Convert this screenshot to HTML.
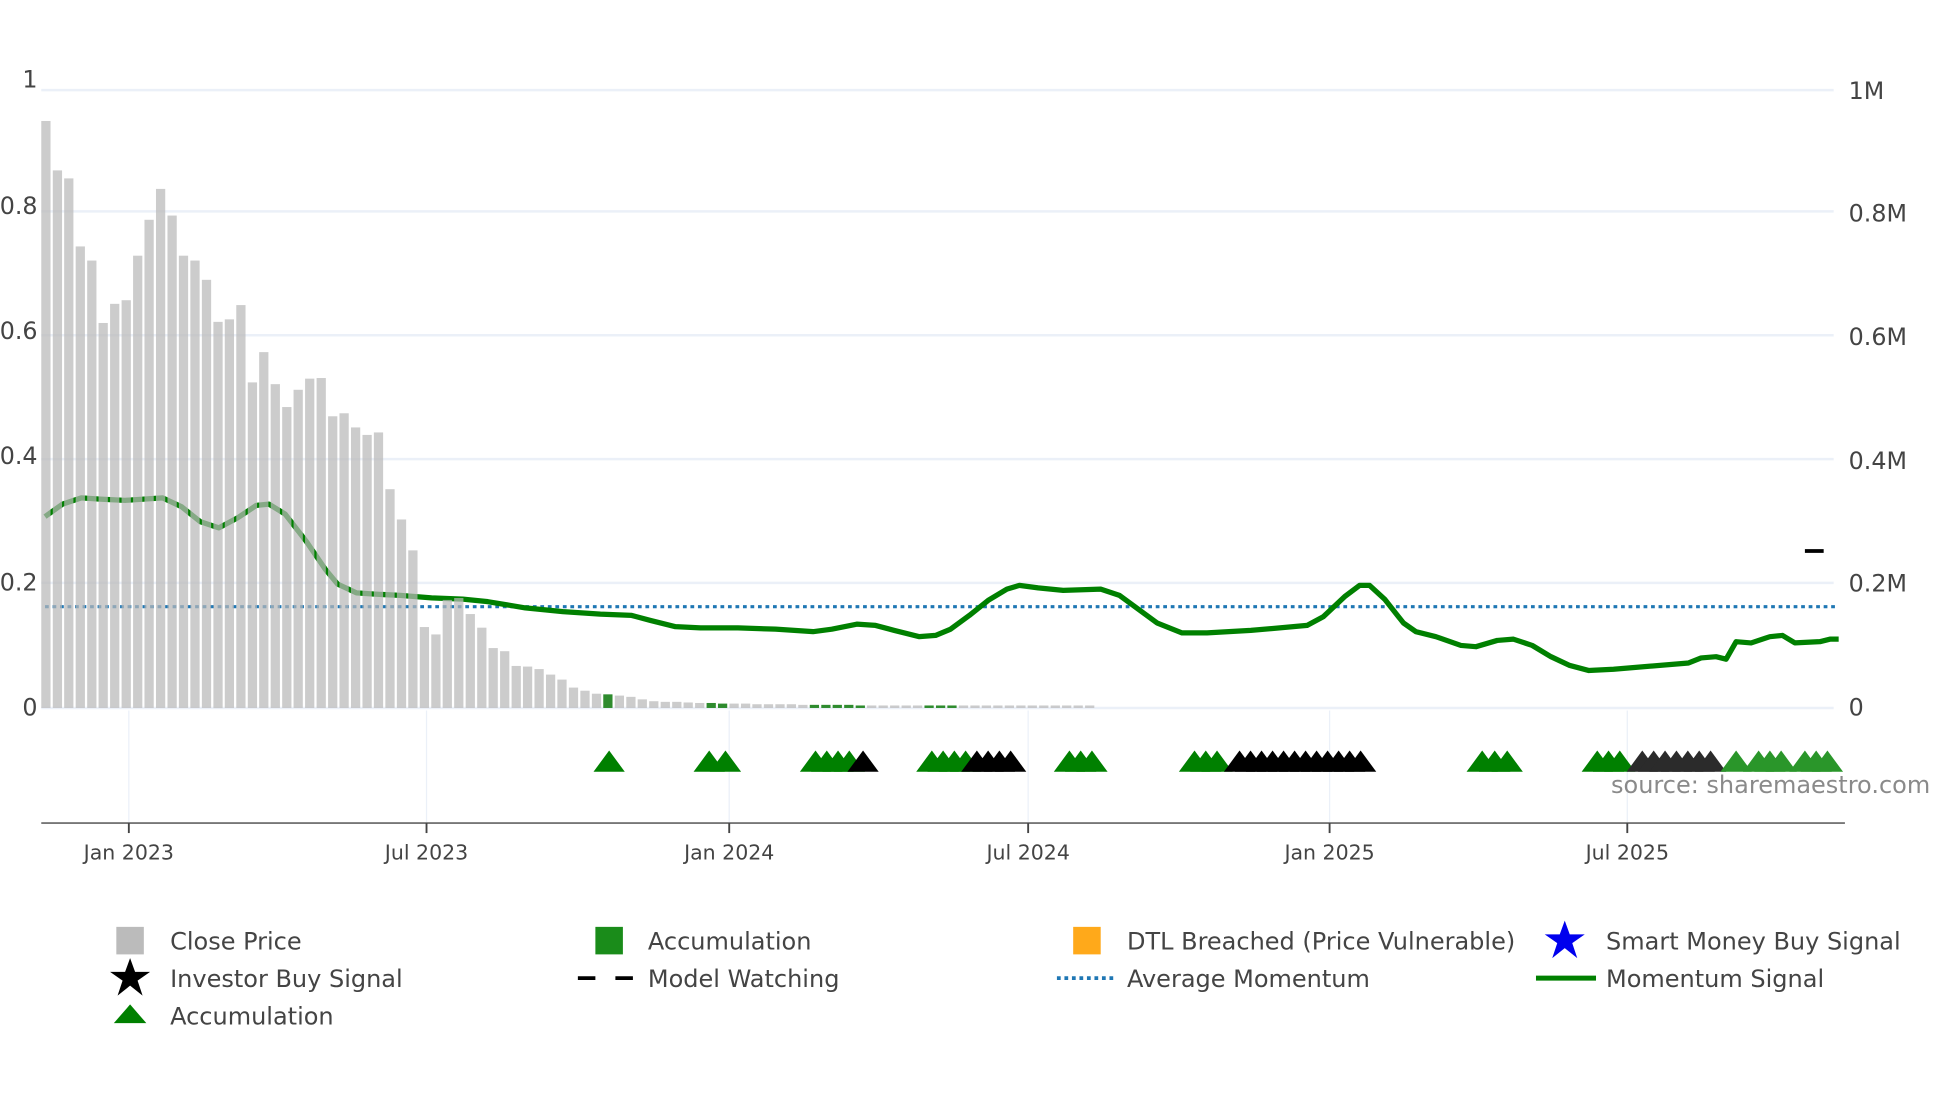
<!DOCTYPE html>
<html><head><meta charset="utf-8"><style>
html,body{margin:0;padding:0;background:#fff;}
svg{display:block;}
text{font-family:"DejaVu Sans","Liberation Sans",sans-serif;fill:#444;}
</style></head><body>
<svg id="s" width="1960" height="1102" viewBox="0 0 1567 881" xmlns="http://www.w3.org/2000/svg">
<g stroke="#ebf0f8" stroke-width="2">
<line x1="33" y1="72" x2="1466" y2="72"/>
<line x1="33" y1="169" x2="1466" y2="169"/>
<line x1="33" y1="268" x2="1466" y2="268"/>
<line x1="33" y1="367" x2="1466" y2="367"/>
<line x1="33" y1="466" x2="1466" y2="466"/>
<line x1="33" y1="566" x2="1466" y2="566"/>
</g>
<g stroke="#ebf0f8" stroke-width="1">
<line x1="103" y1="568" x2="103" y2="658"/><line x1="341" y1="568" x2="341" y2="658"/>
<line x1="583" y1="568" x2="583" y2="658"/><line x1="822" y1="568" x2="822" y2="658"/>
<line x1="1063" y1="568" x2="1063" y2="658"/><line x1="1301" y1="568" x2="1301" y2="658"/>
</g>
<line x1="36" y1="485" x2="1470" y2="485" stroke="#1f77b4" stroke-width="2.5" stroke-dasharray="3,3"/>
<path id="mom" fill="none" stroke="#008000" stroke-width="4.2" stroke-linejoin="round" d=""/>
<g id="bars"></g>
<rect x="1443" y="439" width="15" height="3" fill="#000"/>
<g id="tri"></g>
<text x="1288" y="634" font-size="19.2" style="fill:#8a8a8a">source: sharemaestro.com</text>
<line x1="33" y1="658" x2="1475" y2="658" stroke="#777" stroke-width="1.5"/>
<g stroke="#444" stroke-width="1.5">
<line x1="103" y1="658" x2="103" y2="666"/><line x1="341" y1="658" x2="341" y2="666"/>
<line x1="583" y1="658" x2="583" y2="666"/><line x1="822" y1="658" x2="822" y2="666"/>
<line x1="1063" y1="658" x2="1063" y2="666"/><line x1="1301" y1="658" x2="1301" y2="666"/>
</g>
<g font-size="16.4" text-anchor="middle">
<text x="103" y="687">Jan 2023</text><text x="341" y="687">Jul 2023</text>
<text x="583" y="687">Jan 2024</text><text x="822" y="687">Jul 2024</text>
<text x="1063" y="687">Jan 2025</text><text x="1301" y="687">Jul 2025</text>
</g>
<g font-size="19" text-anchor="end">
<text x="30" y="70">1</text><text x="30" y="171">0.8</text><text x="30" y="271">0.6</text>
<text x="30" y="371">0.4</text><text x="30" y="472">0.2</text><text x="30" y="572">0</text>
</g>
<g font-size="19">
<text x="1478" y="79">1M</text><text x="1478" y="177">0.8M</text><text x="1478" y="276">0.6M</text>
<text x="1478" y="375">0.4M</text><text x="1478" y="473">0.2M</text><text x="1478" y="572">0</text>
</g>
<g font-size="19.2">
<rect x="93" y="741" width="22" height="22" fill="#bbb"/><text x="136" y="759">Close Price</text>
<rect x="476" y="741" width="22" height="22" fill="#1a8c1a"/><text x="518" y="759">Accumulation</text>
<rect x="858" y="741" width="22" height="22" fill="#ffa91a"/><text x="901" y="759">DTL Breached (Price Vulnerable)</text>
<polygon points="1251,736 1255,747 1267,747 1257,754 1261,766 1251,758 1241,766 1245,754 1235,747 1247,747" fill="#0000ee"/><text x="1284" y="759">Smart Money Buy Signal</text>
<polygon points="104,766 108,777 120,777 110,784 114,796 104,788 94,796 98,784 88,777 100,777" fill="#000"/><text x="136" y="789">Investor Buy Signal</text>
<line x1="462" y1="782" x2="506" y2="782" stroke="#000" stroke-width="3" stroke-dasharray="14,16"/><text x="518" y="789">Model Watching</text>
<line x1="845" y1="782" x2="891" y2="782" stroke="#1f77b4" stroke-width="3" stroke-dasharray="3,3"/><text x="901" y="789">Average Momentum</text>
<line x1="1228" y1="782" x2="1276" y2="782" stroke="#008000" stroke-width="4"/><text x="1284" y="789">Momentum Signal</text>
<polygon points="104,803 117,818 91,818" fill="#008000"/><text x="136" y="819">Accumulation</text>
</g>
</svg>
<script>
var v=[0.95,0.87,0.857,0.747,0.724,0.623,0.654,0.66,0.732,0.79,0.84,0.797,0.732,0.724,0.693,0.625,0.629,0.652,0.527,0.576,0.524,0.487,0.515,0.533,0.534,0.472,0.477,0.454,0.442,0.446,0.354,0.305,0.255,0.131,0.119,0.175,0.178,0.152,0.13,0.097,0.092,0.068,0.067,0.063,0.054,0.046,0.033,0.028,0.023,0.022,0.02,0.018,0.014,0.011,0.01,0.01,0.009,0.008,0.008,0.007,0.007,0.007,0.006,0.006,0.006,0.006,0.005,0.005,0.005,0.005,0.005,0.004,0.004,0.004,0.004,0.004,0.003,0.003,0.003,0.003,0.003,0.003,0.002,0.002,0.002,0.002,0.002,0.002,0.002,0.001,0.001,0.001];
var greens={49:1,58:1,59:1,67:1,68:1,69:1,70:1,71:1,77:1,78:1,79:1};
var g='';for(var i=0;i<v.length;i++){var x=33+i*9.17,h=v[i]*494;if(h<2)h=2;g+='<rect x="'+x.toFixed(1)+'" y="'+(566-h).toFixed(1)+'" width="7.4" height="'+h.toFixed(1)+'" fill="'+(greens[i]?'#2e8b2e':'#b8b8b8')+'" fill-opacity="'+(greens[i]?1:0.72)+'"/>';}
document.getElementById('bars').innerHTML=g;
var p=[[36,413],[50,403],[65,398],[80,399],[100,400],[130,398],[145,405],[160,417],[175,422],[190,414],[205,404],[215,403],[228,411],[245,433],[260,455],[270,467],[285,474],[300,475],[320,476],[345,478],[370,479],[390,481],[420,486],[450,489],[480,491],[505,492],[520,496],[540,501],[560,502],[590,502],[620,503],[650,505],[665,503],[685,499],[700,500],[715,504],[735,509],[748,508],[760,503],[775,492],[790,480],[805,471],[815,468],[830,470],[850,472],[880,471],[895,476],[910,487],[925,498],[945,506],[965,506],[1000,504],[1045,500],[1058,493],[1075,477],[1087,468],[1095,468],[1107,479],[1122,498],[1132,505],[1148,509],[1168,516],[1180,517],[1197,512],[1210,511],[1225,516],[1240,525],[1255,532],[1270,536],[1290,535],[1350,530],[1360,526],[1372,525],[1380,527],[1388,513],[1400,514],[1415,509],[1425,508],[1435,514],[1455,513],[1463,511],[1470,511]];
document.getElementById('mom').setAttribute('d','M'+p.map(function(a){return a.join(',')}).join(' L'));
var T=[[487,'g'],[567,'g'],[580,'g'],[652,'g'],[661,'g'],[670,'g'],[679,'g'],[690,'k'],[745,'g'],[754,'g'],[763,'g'],[772,'g'],[781,'k'],[790,'k'],[799,'k'],[808,'k'],[855,'g'],[864,'g'],[873,'g'],[955,'g'],[964,'g'],[973,'g']];
for(var x=991;x<=1096;x+=8.8)T.push([x,'k']);
T=T.concat([[1185,'g'],[1195,'g'],[1205,'g'],[1277,'g'],[1286,'g'],[1295,'g']]);
for(var x=1313;x<=1368;x+=9.1)T.push([x,'d']);
T=T.concat([[1388,'g2'],[1406,'g2'],[1415,'g2'],[1424,'g2'],[1443,'g2'],[1452,'g2'],[1461,'g2']]);
var c={g:'#008000',k:'#000',d:'#2b2b2b',g2:'#2a962a'};var t='';
T.forEach(function(a){t+='<polygon points="'+a[0]+',600 '+(a[0]+12.5)+',617 '+(a[0]-12.5)+',617" fill="'+c[a[1]]+'"/>';});
document.getElementById('tri').innerHTML=t;
</script>
</body></html>
